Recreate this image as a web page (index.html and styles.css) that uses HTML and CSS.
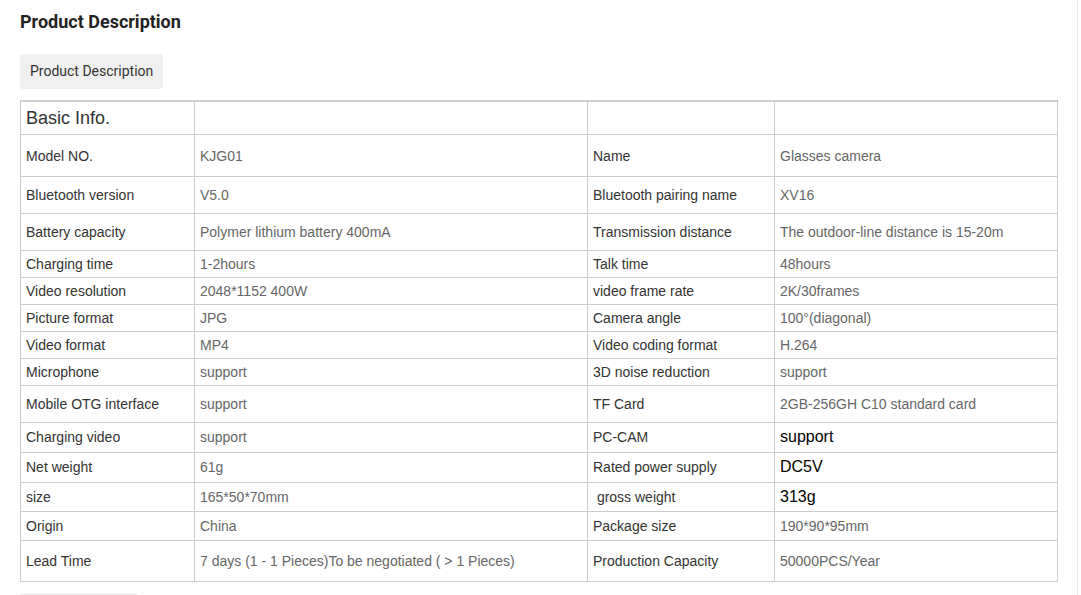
FILE: index.html
```html
<!DOCTYPE html>
<html>
<head>
<meta charset="utf-8">
<link rel="stylesheet" href="styles.css">
</head>
<body>
<div class="page">
  <h2 class="title">Product Description</h2>
  <div class="tab">Product Description</div>
  <table class="spec">
    <colgroup><col class="c1"><col class="c2"><col class="c3"><col class="c4"></colgroup>
    <tr class="h33"><td class="basic">Basic Info.</td><td></td><td></td><td></td></tr>
    <tr class="h42 low"><td>Model NO.</td><td class="v">KJG01</td><td>Name</td><td class="v">Glasses camera</td></tr>
    <tr class="h37"><td>Bluetooth version</td><td class="v">V5.0</td><td>Bluetooth pairing name</td><td class="v">XV16</td></tr>
    <tr class="h37"><td>Battery capacity</td><td class="v">Polymer lithium battery 400mA</td><td>Transmission distance</td><td class="v">The outdoor-line distance is 15-20m</td></tr>
    <tr class="h27"><td>Charging time</td><td class="v">1-2hours</td><td>Talk time</td><td class="v">48hours</td></tr>
    <tr class="h27"><td>Video resolution</td><td class="v">2048*1152 400W</td><td>video frame rate</td><td class="v">2K/30frames</td></tr>
    <tr class="h27"><td>Picture format</td><td class="v">JPG</td><td>Camera angle</td><td class="v">100°(diagonal)</td></tr>
    <tr class="h27"><td>Video format</td><td class="v">MP4</td><td>Video coding format</td><td class="v">H.264</td></tr>
    <tr class="h27"><td>Microphone</td><td class="v">support</td><td>3D noise reduction</td><td class="v">support</td></tr>
    <tr class="h37"><td>Mobile OTG interface</td><td class="v">support</td><td>TF Card</td><td class="v">2GB-256GH C10 standard card</td></tr>
    <tr class="h30"><td>Charging video</td><td class="v">support</td><td>PC-CAM</td><td class="big">support</td></tr>
    <tr class="h30"><td>Net weight</td><td class="v">61g</td><td>Rated power supply</td><td class="big">DC5V</td></tr>
    <tr class="h29"><td>size</td><td class="v">165*50*70mm</td><td>&nbsp;gross weight</td><td class="big">313g</td></tr>
    <tr class="h29"><td>Origin</td><td class="v">China</td><td>Package size</td><td class="v">190*90*95mm</td></tr>
    <tr class="h41"><td>Lead Time</td><td class="v">7 days (1 - 1 Pieces)To be negotiated ( &gt; 1 Pieces)</td><td>Production Capacity</td><td class="v">50000PCS/Year</td></tr>
  </table>
  <div class="tab next"></div>
</div>
</body>
</html>
```

FILE: styles.css
```css
html, body {
  margin: 0;
  padding: 0;
  background: #fff;
}
body {
  width: 1077px;
  height: 595px;
  overflow: hidden;
  border-right: 1px solid #e4eaf0;
  font-family: Roboto, "Liberation Sans", Arial, sans-serif;
}
.page {
  padding: 11px 0 0 20px;
}
.title {
  margin: 0;
  font-family: Roboto, sans-serif;
  font-weight: 700;
  font-size: 18px;
  line-height: 22px;
  color: #222;
}
.tab {
  display: inline-block;
  margin-top: 21px;
  padding: 0 10px;
  height: 35px;
  line-height: 35px;
  background: #f0f0f0;
  border-radius: 3px;
  font-family: Roboto, sans-serif;
  font-size: 14px;
  color: #333;
}
.tab.next {
  display: block;
  width: 98px;
  margin-top: 11px;
}
.spec {
  display: table;
  margin-top: 11px;
  width: 1038px;
  border-collapse: collapse;
  border-top: 2px solid #d0d0d0;
  font-family: "Liberation Sans", Arial, sans-serif;
  font-size: 14px;
  color: #333;
}
.c1 { width: 174px; }
.c2 { width: 393px; }
.c3 { width: 187px; }
.c4 { width: 283px; }
.spec td {
  border: 1px solid #ccc;
  padding: 0 5px;
  vertical-align: middle;
  line-height: 16px;
}
.spec .low td { padding-top: 2px; }
.spec td.v { color: #666; }
.spec td.big { font-size: 16px; color: #000; }
.spec td.basic { font-size: 18px; }
.h33 { height: 33px; }
.h42 { height: 42px; }
.h37 { height: 37px; }
.h27 { height: 27px; }
.h29 { height: 29px; }
.h30 { height: 30px; }
.h41 { height: 41px; }
```
